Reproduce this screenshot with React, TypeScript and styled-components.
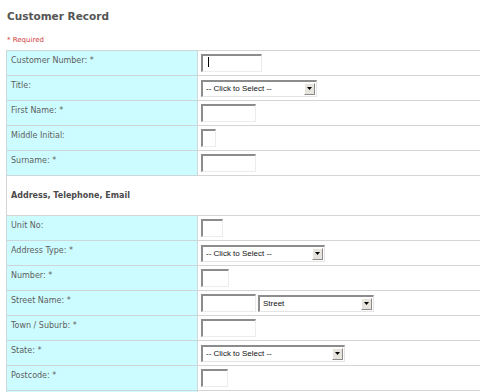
import React from 'react';
import styled, { createGlobalStyle } from 'styled-components';

const GlobalStyle = createGlobalStyle`
  html, body {
    margin: 0;
    padding: 0;
    background: #fff;
    overflow: hidden;
  }
  body {
    font-family: "DejaVu Sans", Verdana, sans-serif;
  }
`

type Field = {
  label: string
  required?: boolean
  inputs: Array<{ kind: 'text'; width: number } | { kind: 'select'; width: number; text: string }>
}

const personFields: Field[] = [
  { label: 'Customer Number:', required: true, inputs: [{ kind: 'text', width: 61 }] },
  { label: 'Title:', inputs: [{ kind: 'select', width: 116, text: '-- Click to Select --' }] },
  { label: 'First Name:', required: true, inputs: [{ kind: 'text', width: 55 }] },
  { label: 'Middle Initial:', inputs: [{ kind: 'text', width: 15 }] },
  { label: 'Surname:', required: true, inputs: [{ kind: 'text', width: 55 }] },
]

const addressFields: Field[] = [
  { label: 'Unit No:', inputs: [{ kind: 'text', width: 22 }] },
  { label: 'Address Type:', required: true, inputs: [{ kind: 'select', width: 124, text: '-- Click to Select --' }] },
  { label: 'Number:', required: true, inputs: [{ kind: 'text', width: 28 }] },
  {
    label: 'Street Name:',
    required: true,
    inputs: [
      { kind: 'text', width: 55 },
      { kind: 'select', width: 116, text: 'Street' },
    ],
  },
  { label: 'Town / Suburb:', required: true, inputs: [{ kind: 'text', width: 55 }] },
  { label: 'State:', required: true, inputs: [{ kind: 'select', width: 144, text: '-- Click to Select --' }] },
  { label: 'Postcode:', required: true, inputs: [{ kind: 'text', width: 27 }] },
]

const Page = styled.div`
  width: 480px;
  height: 392px;
  overflow: hidden;
  padding: 0 0 0 6px;
  box-sizing: border-box;
`

const Heading = styled.h1`
  margin: 0;
  padding: 10px 0 0 1px;
  height: 22px;
  font-size: 10.5px;
  font-weight: bold;
  color: #555;
  font-family: "DejaVu Sans", Verdana, sans-serif;
`

const RequiredNote = styled.div`
  padding: 4px 0 0 1px;
  height: 14px;
  font-size: 7px;
  color: #d23c3c;
`

const Table = styled.table`
  border-collapse: collapse;
  width: 500px;
  table-layout: fixed;
`

const Row = styled.tr<{ $tall?: boolean }>`
  height: ${p => (p.$tall ? 40 : 25)}px;
`

const LabelCell = styled.td`
  width: 182px;
  background: #ccfcff;
  border: 1px solid #cfd6d8;
  padding: 5px 4px 0;
  vertical-align: top;
  font-size: 8px;
  line-height: 10px;
  color: #5e5e5e;
  white-space: nowrap;
`

const ValueCell = styled.td`
  background: #fff;
  border: 1px solid #d4d4d4;
  padding: 0 0 0 3px;
  vertical-align: middle;
`

const SectionCell = styled.td`
  background: #fff;
  border: 1px solid #d4d4d4;
  padding: 0 4px;
  vertical-align: middle;
  font-size: 8px;
  font-weight: bold;
  color: #4a4a4a;
`

const Controls = styled.div`
  display: flex;
  align-items: center;
  gap: 2px;
`

const TextBox = styled.input`
  box-sizing: border-box;
  height: 18px;
  margin: 0;
  padding: 0;
  background: #fff;
  border-style: solid;
  border-width: 2px 1px 1px 2px;
  border-color: #8c8c8c #ececec #ececec #8c8c8c;
  outline: none;
`

const SelectBox = styled.div`
  box-sizing: border-box;
  height: 17px;
  display: flex;
  align-items: center;
  background: #fff;
  border-style: solid;
  border-width: 2px 1px 1px 2px;
  border-color: #8c8c8c #e4e4e4 #e4e4e4 #8c8c8c;
  font-family: "Liberation Sans", Arial, sans-serif;
  font-size: 8px;
  color: #111;
`

const SelectText = styled.span`
  flex: 1;
  padding-left: 3px;
  white-space: nowrap;
  overflow: hidden;
`

const ArrowButton = styled.span`
  box-sizing: border-box;
  width: 11px;
  height: 12px;
  margin-right: 1px;
  display: flex;
  align-items: center;
  justify-content: center;
  background: #e6e4dc;
  border-style: solid;
  border-width: 1px;
  border-color: #fff #8a8a8a #8a8a8a #fff;
`

const Caret = styled.span`
  position: absolute;
  left: 7px;
  top: 3px;
  width: 1px;
  height: 10px;
  background: #000;
`

const CaretWrap = styled.span`
  position: relative;
  display: inline-flex;
`

const Arrow = () => (
  <svg width="5" height="3" viewBox="0 0 5 3">
    <path d="M0 0 H5 L2.5 3 Z" fill="#000" />
  </svg>
)

const FieldRow = ({ field, focus }: { field: Field; focus?: boolean }) => (
  <Row>
    <LabelCell>
      {field.label}
      {field.required ? ' *' : ''}
    </LabelCell>
    <ValueCell>
      <Controls>
        {field.inputs.map((input, i) =>
          input.kind === 'text' ? (
            focus && i === 0 ? (
              <CaretWrap key={i}>
                <TextBox type="text" style={{ width: input.width }} />
                <Caret />
              </CaretWrap>
            ) : (
              <TextBox key={i} type="text" style={{ width: input.width }} />
            )
          ) : (
            <SelectBox key={i} style={{ width: input.width }}>
              <SelectText>{input.text}</SelectText>
              <ArrowButton>
                <Arrow />
              </ArrowButton>
            </SelectBox>
          )
        )}
      </Controls>
    </ValueCell>
  </Row>
)

const App = () => {
  return (
    <Page>
      <GlobalStyle />
      <Heading>Customer Record</Heading>
      <RequiredNote>* Required</RequiredNote>
      <Table>
        <tbody>
          {personFields.map((f, i) => (
            <FieldRow key={f.label} field={f} focus={i === 0} />
          ))}
          <Row $tall>
            <SectionCell colSpan={2}>Address, Telephone, Email</SectionCell>
          </Row>
          {addressFields.map(f => (
            <FieldRow key={f.label} field={f} />
          ))}
          <Row>
            <LabelCell />
            <ValueCell />
          </Row>
        </tbody>
      </Table>
    </Page>
  );
};

export default App;
